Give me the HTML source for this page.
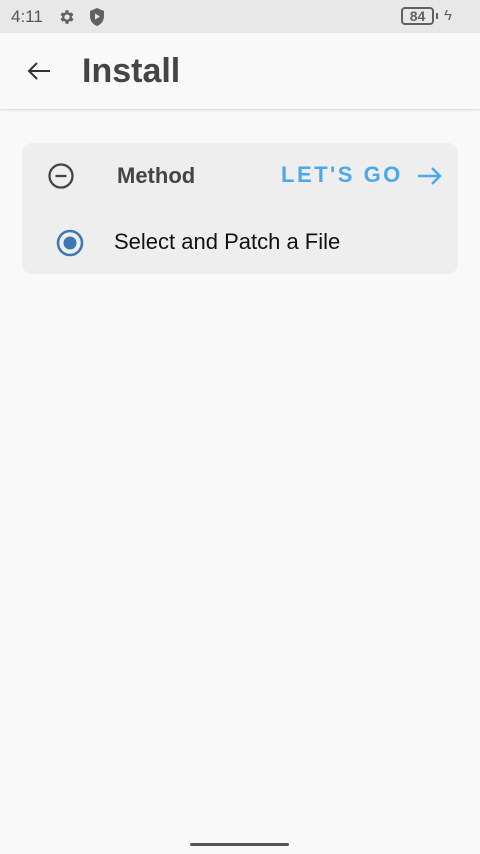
<!DOCTYPE html>
<html><head><style>
body{margin:0;width:480px;height:854px;background:#f9f9f9;font-family:"Liberation Sans",sans-serif;position:relative;overflow:hidden}
.sb{position:absolute;top:0;left:0;width:480px;height:33px;background:#e8e8e8}
.hdr{position:absolute;top:33px;left:0;width:480px;height:76px;background:#f9f9f9;box-shadow:0 1px 2px rgba(0,0,0,.15)}
.card{position:absolute;left:22px;top:143px;width:436px;height:131px;background:#eeeeee;border-radius:10px}
</style></head><body>
<div class="sb">
<span style="position:absolute;left:11px;top:7px;font-size:17px;color:#555">4:11</span>
<svg style="position:absolute;left:58px;top:8px" width="18" height="18" viewBox="0 0 24 24"><path fill="#616161" d="M19.4 13a7.5 7.5 0 000-2l2.1-1.6-2-3.5-2.5 1a7 7 0 00-1.7-1L15 3h-4l-.4 2.9a7 7 0 00-1.7 1l-2.5-1-2 3.5L6.6 11a7.5 7.5 0 000 2l-2.1 1.6 2 3.5 2.5-1a7 7 0 001.7 1L11 21h4l.4-2.9a7 7 0 001.7-1l2.5 1 2-3.5zM13 15.5a3.5 3.5 0 110-7 3.5 3.5 0 010 7z" transform="translate(-1 0)"/></svg>
<svg style="position:absolute;left:88px;top:7px" width="18" height="20" viewBox="0 0 18 20"><path fill="#616161" d="M9 1l7 3v5c0 5-3 8.5-7 10C5 17.5 2 14 2 9V4z"/><path fill="#e8e8e8" d="M7 6.5v6l5-3z"/></svg>
<div style="position:absolute;left:401px;top:7px;width:33px;height:18px;border:2px solid #616161;border-radius:4px;box-sizing:border-box;font-size:14px;font-weight:bold;color:#616161;text-align:center;line-height:15px">84</div>
<div style="position:absolute;left:436px;top:13px;width:2px;height:6px;background:#616161"></div>
<span style="position:absolute;left:444px;top:7px;font-size:15px;color:#616161">ϟ</span>
</div>
<div class="hdr">
<svg style="position:absolute;left:26px;top:27px" width="26" height="22" viewBox="0 0 26 22"><path d="M24 11H3M11 3L3 11l8 8" stroke="#333" stroke-width="2" fill="none"/></svg>
<span style="position:absolute;left:82px;top:19px;font-size:34px;font-weight:bold;color:#444">Install</span>
</div>
<div class="card">
<svg style="position:absolute;left:25px;top:19px" width="28" height="28" viewBox="0 0 28 28"><circle cx="14" cy="14" r="11.5" stroke="#444" stroke-width="2.3" fill="none"/><path d="M8.5 14h11" stroke="#444" stroke-width="2.3"/></svg>
<span style="position:absolute;left:95px;top:20px;font-size:22px;font-weight:bold;color:#444">Method</span>
<span style="position:absolute;left:259px;top:19px;font-size:22px;font-weight:bold;color:#4aa8ee;letter-spacing:2.5px">LET'S GO</span>
<svg style="position:absolute;left:395px;top:22px" width="26" height="22" viewBox="0 0 26 22"><path d="M1 11h22M15 3l8 8-8 8" stroke="#4aa8ee" stroke-width="2.4" fill="none"/></svg>
<svg style="position:absolute;left:33px;top:85px" width="30" height="30" viewBox="0 0 30 30"><circle cx="15" cy="15" r="12" stroke="#3d78b5" stroke-width="2.6" fill="none"/><circle cx="15" cy="15" r="6.5" fill="#3d78b5"/></svg>
<span style="position:absolute;left:92px;top:86px;font-size:22px;color:#111">Select and Patch a File</span>
</div>
<div style="position:absolute;left:190px;top:843px;width:99px;height:3px;background:#555;border-radius:2px"></div>
</body></html>
